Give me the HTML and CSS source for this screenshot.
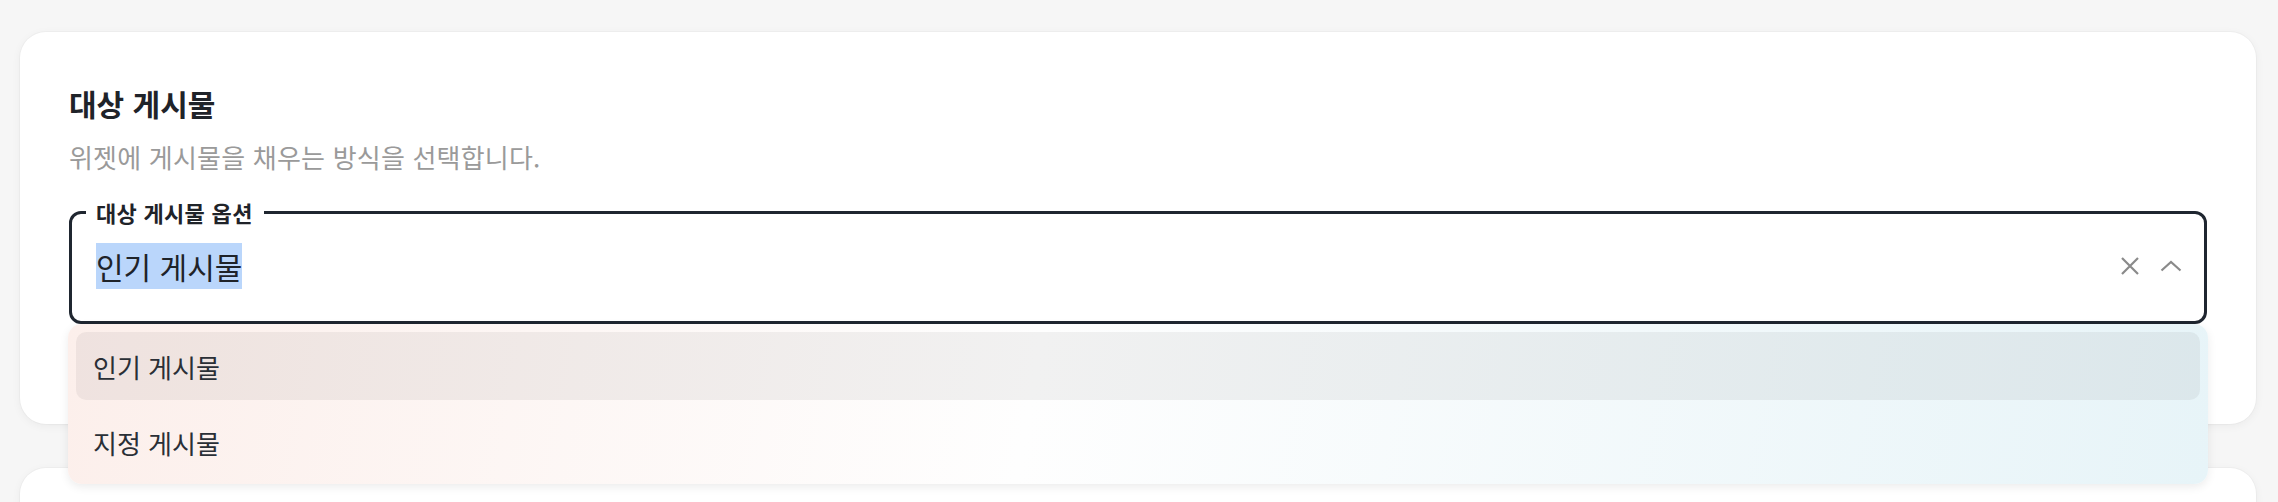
FILE: index.html
```html
<!DOCTYPE html>
<html lang="ko">
  <head>
    <meta charset="UTF-8" />
    <meta name="viewport" content="width=device-width, initial-scale=1.0" />
    <title>대상 게시물</title>
    <link rel="stylesheet" href="styles.css">
  </head>
  <body>
    <section class="card">
      <h2 class="card-title">대상 게시물</h2>
      <p class="card-desc">위젯에 게시물을 채우는 방식을 선택합니다.</p>

      <div class="select-wrap">
        <fieldset class="select-box">
          <legend>대상 게시물 옵션</legend>
          <div class="select-row">
            <span class="select-value"><span class="selected-text">인기 게시물</span></span>
            <button class="icon-btn" aria-label="지우기">
              <svg width="20" height="20" viewBox="0 0 20 20">
                <path d="M2 2 L18 18 M18 2 L2 18" stroke="#8a8a8a" stroke-width="2.2" fill="none" />
              </svg>
            </button>
            <button class="icon-btn" aria-label="닫기">
              <svg width="22" height="12" viewBox="0 0 22 12">
                <path d="M1.5 10.5 L11 2 L20.5 10.5" stroke="#8a8a8a" stroke-width="2.2" fill="none" />
              </svg>
            </button>
          </div>
        </fieldset>

        <!-- open dropdown list -->
        <ul class="options">
          <li class="option active">인기 게시물</li>
          <li class="option">지정 게시물</li>
        </ul>
      </div>
    </section>

    <section class="card card-next"></section>
  </body>
</html>
```

FILE: styles.css
```css
body {
  margin: 0;
  padding: 32px 22px 0 20px;
  background-color: #f6f6f6;
  font-family: "Noto Sans CJK KR", "Noto Sans", sans-serif;
  color: #1f2329;
}
.card {
  background-color: #fff;
  border-radius: 26px;
  padding: 52px 49px 100px 49px;
  box-shadow: 0 0 0 1px rgba(0, 0, 0, 0.025), 0 2px 10px rgba(0, 0, 0, 0.05);
}
.card-next {
  margin-top: 44px;
  height: 120px;
  padding: 0;
}
.card-title {
  margin: 0;
  font-size: 30px;
  line-height: 38px;
  font-weight: 700;
}
.card-desc {
  margin: 17px 0 0 0;
  font-size: 26px;
  line-height: 36px;
  color: #9a9a9a;
  letter-spacing: 0.2px;
}
.select-wrap {
  position: relative;
  margin-top: 23px;
}
.select-box {
  margin: 0;
  border: 3px solid #1f2630;
  border-radius: 12px;
  padding: 17px 22px 32px 24px;
}
.select-box legend {
  margin-left: -10px;
  padding: 0 11px 0 10px;
  font-size: 22px;
  line-height: 28px;
  font-weight: 600;
  letter-spacing: 0.3px;
}
.select-row {
  display: flex;
  align-items: center;
  gap: 20px;
}
.select-value {
  flex: 1;
  font-size: 30px;
  line-height: 46px;
}
.selected-text {
  background-color: #bad6fb;
  display: inline-block;
}
.icon-btn {
  border: none;
  background: none;
  padding: 0;
  display: flex;
  align-items: center;
}
.options {
  position: absolute;
  top: 100%;
  left: -1px;
  right: -1px;
  margin: 0;
  padding: 8px;
  list-style: none;
  border-radius: 14px;
  background: linear-gradient(100deg, #fcefeb 0%, #fefefe 45%, #e7f4f8 100%);
  box-shadow: 0 3px 10px rgba(0, 0, 0, 0.08);
  display: flex;
  flex-direction: column;
  gap: 8px;
}
.option {
  height: 68px;
  display: flex;
  align-items: center;
  padding-left: 17px;
  border-radius: 10px;
  font-size: 26px;
  color: #2a2f36;
}
.option.active {
  background-color: rgba(0, 0, 0, 0.05);
}
```
